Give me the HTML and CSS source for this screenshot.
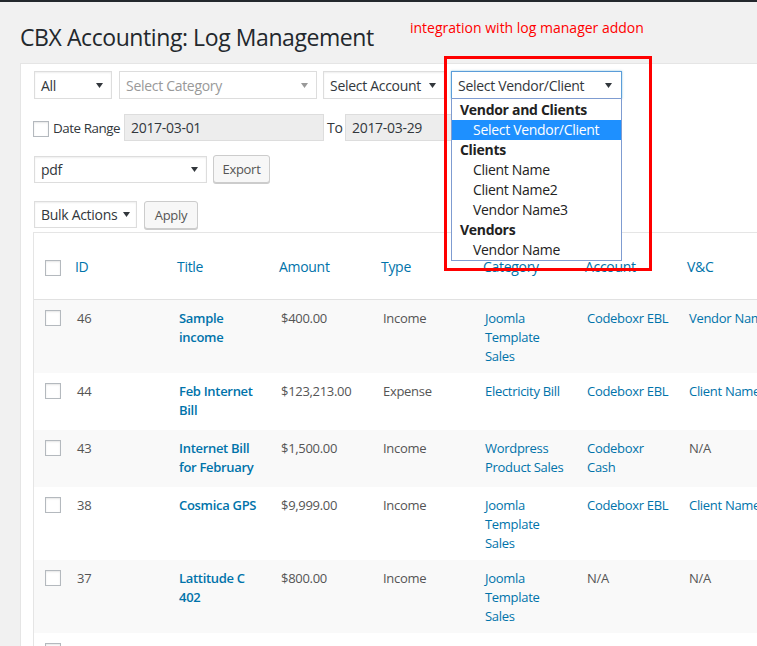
FILE: index.html
```html
<!DOCTYPE html>
<html lang="en">
<head>
<meta charset="utf-8">
<title>CBX Accounting: Log Management</title>
<link rel="stylesheet" href="styles.css">
</head>
<body>
<div class="topbar"></div>
<div class="wrap">
  <h1 class="page-title">CBX Accounting: Log Management</h1>
  <div class="note">integration with log manager addon</div>
  <div class="note-box"></div>

  <div class="panel">
    <div class="filters">
      <div class="select sel-all"><span>All</span><svg class="arrow" viewBox="0 0 7 5"><polygon points="0,0 7,0 3.5,5"/></svg></div>
      <div class="select sel-cat placeholder"><span>Select Category</span><svg class="arrow" viewBox="0 0 7 5"><polygon points="0,0 7,0 3.5,5"/></svg></div>
      <div class="select sel-acc"><span>Select Account</span><svg class="arrow" viewBox="0 0 7 5"><polygon points="0,0 7,0 3.5,5"/></svg></div>
      <div class="vendor-wrap">
        <div class="select sel-vendor focus"><span>Select Vendor/Client</span><svg class="arrow" viewBox="0 0 7 5"><polygon points="0,0 7,0 3.5,5"/></svg></div>
        <ul class="dropdown">
          <li class="group">Vendor and Clients</li>
          <li class="opt selected">Select Vendor/Client</li>
          <li class="group">Clients</li>
          <li class="opt">Client Name</li>
          <li class="opt">Client Name2</li>
          <li class="opt">Vendor Name3</li>
          <li class="group">Vendors</li>
          <li class="opt">Vendor Name</li>
        </ul>
      </div>
    </div>

    <div class="daterow">
      <span class="checkbox cb-date"></span>
      <span class="lbl lbl-date">Date Range</span>
      <div class="date-input">2017-03-01</div>
      <span class="lbl to">To</span>
      <div class="date-input">2017-03-29</div>
    </div>

    <div class="exportrow">
      <div class="select sel-pdf"><span>pdf</span><svg class="arrow" viewBox="0 0 7 5"><polygon points="0,0 7,0 3.5,5"/></svg></div>
      <button class="btn btn-export">Export</button>
    </div>

    <div class="bulkrow">
      <div class="select sel-bulk"><span>Bulk Actions</span><svg class="arrow" viewBox="0 0 7 5"><polygon points="0,0 7,0 3.5,5"/></svg></div>
      <button class="btn btn-apply">Apply</button>
    </div>

    <table class="list">
      <colgroup>
        <col class="c-check"><col class="c-col"><col class="c-col"><col class="c-col"><col class="c-col"><col class="c-col"><col class="c-col"><col class="c-col">
      </colgroup>
      <thead>
        <tr>
          <th class="check"><span class="checkbox"></span></th>
          <th>ID</th>
          <th>Title</th>
          <th>Amount</th>
          <th>Type</th>
          <th>Category</th>
          <th>Account</th>
          <th>V&amp;C</th>
        </tr>
      </thead>
      <tbody>
        <tr class="alt">
          <td class="check"><span class="checkbox"></span></td>
          <td>46</td>
          <td class="title">Sample<br>income</td>
          <td>$400.00</td>
          <td>Income</td>
          <td class="link">Joomla<br>Template<br>Sales</td>
          <td class="link">Codeboxr EBL</td>
          <td class="link">Vendor Name</td>
        </tr>
        <tr>
          <td class="check"><span class="checkbox"></span></td>
          <td>44</td>
          <td class="title">Feb Internet<br>Bill</td>
          <td>$123,213.00</td>
          <td>Expense</td>
          <td class="link">Electricity Bill</td>
          <td class="link">Codeboxr EBL</td>
          <td class="link">Client Name</td>
        </tr>
        <tr class="alt">
          <td class="check"><span class="checkbox"></span></td>
          <td>43</td>
          <td class="title">Internet Bill<br>for February</td>
          <td>$1,500.00</td>
          <td>Income</td>
          <td class="link">Wordpress<br>Product Sales</td>
          <td class="link">Codeboxr<br>Cash</td>
          <td>N/A</td>
        </tr>
        <tr>
          <td class="check"><span class="checkbox"></span></td>
          <td>38</td>
          <td class="title">Cosmica GPS</td>
          <td>$9,999.00</td>
          <td>Income</td>
          <td class="link">Joomla<br>Template<br>Sales</td>
          <td class="link">Codeboxr EBL</td>
          <td class="link">Client Name</td>
        </tr>
        <tr class="alt">
          <td class="check"><span class="checkbox"></span></td>
          <td>37</td>
          <td class="title">Lattitude C<br>402</td>
          <td>$800.00</td>
          <td>Income</td>
          <td class="link">Joomla<br>Template<br>Sales</td>
          <td>N/A</td>
          <td>N/A</td>
        </tr>
        <tr>
          <td class="check"><span class="checkbox"></span></td>
          <td>36</td>
          <td class="title">Domain<br>Renewal</td>
          <td>$120.00</td>
          <td>Expense</td>
          <td class="link">Hosting</td>
          <td class="link">Codeboxr EBL</td>
          <td>N/A</td>
        </tr>
      </tbody>
    </table>
  </div>
</div>
</body>
</html>
```

FILE: styles.css
```css
html, body {
  margin: 0;
  padding: 0;
  overflow: hidden;
}
body {
  background: #f1f1f1;
  font-family: "Open Sans", "Noto Sans", sans-serif;
  font-size: 13px;
  letter-spacing: -0.3px;
  color: #444;
  width: 757px;
  height: 646px;
}
.topbar {
  height: 2px;
  background: #23282d;
}
.wrap {
  position: relative;
  width: 1000px;
}
.page-title {
  margin: 0;
  padding: 21px 0 11px 20px;
  font-size: 23px;
  letter-spacing: -0.42px;
  line-height: 29px;
  font-weight: 400;
  color: #23282d;
}
.note {
  position: absolute;
  left: 410px;
  top: 16px;
  font-size: 14px;
  letter-spacing: 0;
  line-height: 19px;
  color: #f00;
}
.note-box {
  position: absolute;
  left: 444px;
  top: 54px;
  width: 202px;
  height: 209px;
  border: 3px solid #f00;
  z-index: 5;
}
.panel {
  margin-left: 20px;
  background: #fff;
  border: 1px solid #e5e5e5;
  border-right: none;
  padding: 7px 0 0 13px;
  height: 700px;
}
.select {
  box-sizing: border-box;
  height: 28px;
  border: 1px solid #ddd;
  background: #fff;
  box-shadow: inset 0 1px 2px rgba(0,0,0,.07);
  display: flex;
  align-items: center;
  justify-content: space-between;
  padding: 0 8px 0 6px;
  font-size: 14px;
  color: #32373c;
  white-space: nowrap;
}
.select .arrow {
  width: 7px;
  height: 5px;
  fill: #32373c;
  flex: none;
}
.select.placeholder {
  color: #999;
  box-shadow: none;
}
.select.placeholder .arrow { fill: #999; }
.filters {
  display: flex;
  gap: 6px;
  height: 28px;
}
.sel-all { width: 78px; margin-right: 1px; }
.sel-cat { width: 198px; }
.sel-acc { width: 122px; }
.vendor-wrap {
  position: relative;
  width: 171px;
}
.sel-vendor {
  width: 171px;
  border-color: #5b9dd9;
  box-shadow: 0 0 2px rgba(30,140,190,.5);
  padding-right: 9px;
}
.dropdown {
  position: absolute;
  left: 0;
  top: 27px;
  width: 171px;
  box-sizing: border-box;
  margin: 0;
  padding: 1px 0 0 0;
  list-style: none;
  background: #fff;
  border: 1px solid #7f9cd1;
  z-index: 4;
}
.dropdown li {
  height: 20px;
  line-height: 20px;
  font-size: 14px;
  color: #222;
  white-space: nowrap;
}
.dropdown .group {
  font-weight: 700;
  padding-left: 8px;
}
.dropdown .opt {
  padding-left: 21px;
}
.dropdown .selected {
  background: #1e90ff;
  color: #fff;
}
.daterow {
  display: flex;
  align-items: center;
  margin-top: 15px;
  height: 27px;
}
.checkbox {
  display: inline-block;
  box-sizing: border-box;
  width: 16px;
  height: 16px;
  border: 1px solid #b4b9be;
  background: #fff;
  box-shadow: inset 0 1px 2px rgba(0,0,0,.1);
  vertical-align: top;
}
.cb-date {
  margin-left: -1px;
  margin-right: 4px;
  margin-top: 2px;
}
.lbl {
  font-size: 14px;
  color: #32373c;
  white-space: nowrap;
}
.lbl-date {
  width: 67px;
  font-size: 13.4px;
  letter-spacing: -0.45px;
}
.lbl.to { width: 15px; margin: 0 3px 0 3px; }
.date-input {
  box-sizing: border-box;
  width: 200px;
  height: 27px;
  margin-left: 4px;
  background: #ededed;
  border: 1px solid #ddd;
  font-size: 14px;
  color: #32373c;
  line-height: 25px;
  padding-left: 6px;
}
.lbl.to + .date-input { margin-left: 0; }
.exportrow {
  display: flex;
  gap: 6px;
  margin-top: 14px;
  height: 28px;
  align-items: flex-start;
}
.sel-pdf { width: 173px; margin-top: 1px; height: 27px; }
.btn {
  box-sizing: border-box;
  height: 28px;
  border: 1px solid #ccc;
  border-radius: 3px;
  background: #f7f7f7;
  box-shadow: 0 1px 0 #ccc;
  font-family: inherit;
  font-size: 13px;
  letter-spacing: -0.3px;
  color: #555;
  padding: 0 10px;
  line-height: 26px;
}
.btn-export { width: 57px; padding: 0; }
.bulkrow {
  display: flex;
  gap: 7px;
  margin-top: 18px;
  height: 28px;
}
.sel-bulk { width: 103px; height: 27px; padding-right: 6px; }
.btn-apply { width: 54px; padding: 0; }
.list {
  margin-top: 3px;
  margin-left: -1px;
  border: 1px solid #e5e5e5;
  border-spacing: 0;
  table-layout: fixed;
  width: 749px;
  background: #fff;
}
.c-check { width: 33px; }
.c-col { width: 102px; }
.list th {
  box-sizing: border-box;
  height: 67px;
  padding: 0 8px;
  text-align: left;
  font-weight: 400;
  font-size: 14px;
  color: #0073aa;
  border-bottom: 1px solid #e1e1e1;
  vertical-align: middle;
}
.list th.check {
  padding: 0 0 0 11px;
}
.list th.check .checkbox { vertical-align: middle; margin-top: 1px; }
.list td {
  box-sizing: border-box;
  height: 57px;
  padding: 9px 10px 7px;
  vertical-align: top;
  line-height: 19px;
  color: #555;
  white-space: nowrap;
  overflow: hidden;
}
.list td.check {
  padding: 10px 0 0 11px;
}
.list tr.alt td { background: #f9f9f9; }
.list td.title {
  font-weight: 600;
  color: #0073aa;
}
.list td.link { color: #0073aa; }
```
